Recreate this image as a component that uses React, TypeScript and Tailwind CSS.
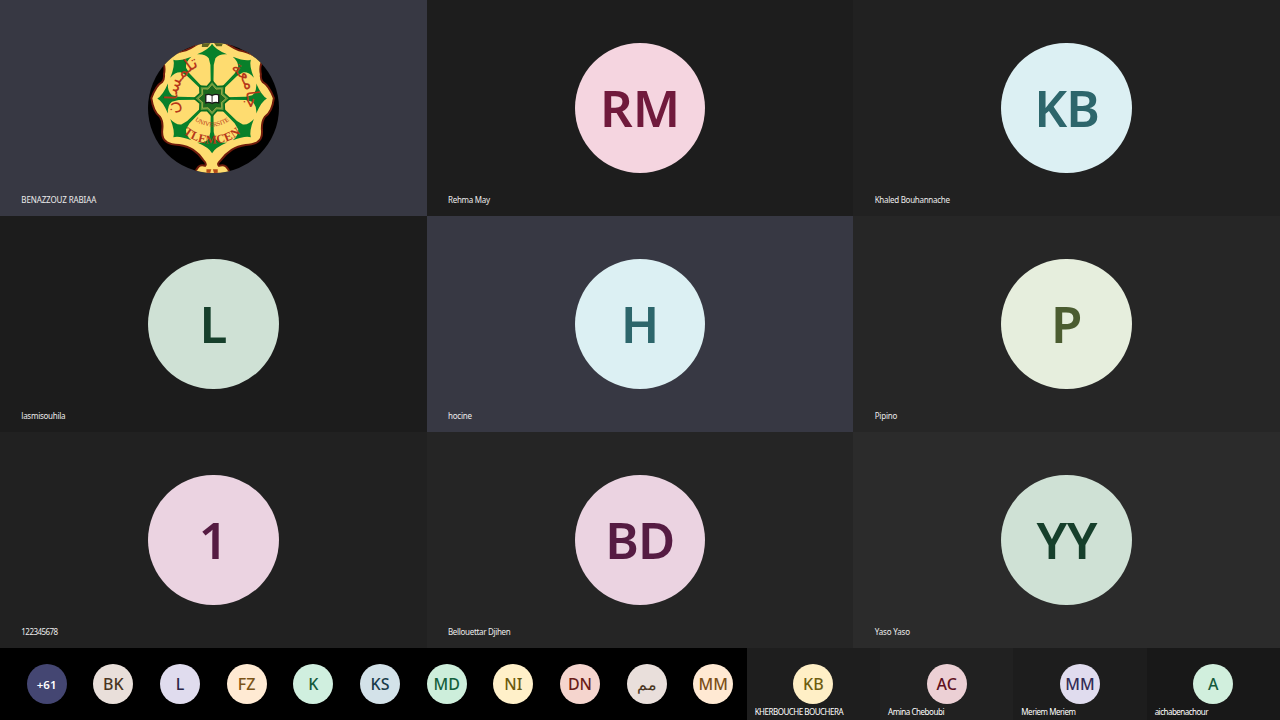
import React from "react";
import clsx from "clsx";

const tiles = [
  { name: "BENAZZOUZ RABIAA", initials: "", tile: "bg-[#373843]", avatar: "", spacing: "tracking-[-0.13px]" },
  { name: "Rehma May", initials: "RM", tile: "bg-[#1d1d1d]", avatar: "bg-[#f5d5e0] text-[#701a3c]", spacing: "tracking-[-0.28px]" },
  { name: "Khaled Bouhannache", initials: "KB", tile: "bg-[#212121]", avatar: "bg-[#dcf0f3] text-[#2d666b] tracking-[-0.8px]", spacing: "tracking-[-0.28px]" },
  { name: "lasmisouhila", initials: "L", tile: "bg-[#1c1c1c]", avatar: "bg-[#cfe1d5] text-[#163f2b]", spacing: "tracking-[-0.26px]" },
  { name: "hocine", initials: "H", tile: "bg-[#373843]", avatar: "bg-[#dcf0f3] text-[#2d666b]", spacing: "tracking-[-0.2px]" },
  { name: "Pipino", initials: "P", tile: "bg-[#262626]", avatar: "bg-[#e6eedd] text-[#4b5c30]", spacing: "tracking-[-0.2px]" },
  { name: "122345678", initials: "1", tile: "bg-[#212121]", avatar: "bg-[#ebd3e1] text-[#551b42]", spacing: "tracking-[-0.55px]" },
  { name: "Bellouettar Djihen", initials: "BD", tile: "bg-[#252525]", avatar: "bg-[#ebd3e1] text-[#551b42] tracking-[-0.8px]", spacing: "tracking-[-0.32px]" },
  { name: "Yaso Yaso", initials: "YY", tile: "bg-[#2b2b2b]", avatar: "bg-[#cfe1d5] text-[#163f2b] tracking-[-0.5px]", spacing: "tracking-[-0.15px]" },
];

const overflow = [
  { initials: "BK", avatar: "bg-[#e9dfda] text-[#4a3521]" },
  { initials: "L", avatar: "bg-[#e0dcee] text-[#2b2548]" },
  { initials: "FZ", avatar: "bg-[#ffead3] text-[#7c5417]" },
  { initials: "K", avatar: "bg-[#d0efdf] text-[#155a3c]" },
  { initials: "KS", avatar: "bg-[#d3e2e9] text-[#193c4a]" },
  { initials: "MD", avatar: "bg-[#cdeedb] text-[#13603b]" },
  { initials: "NI", avatar: "bg-[#fff0c9] text-[#6b5a0c]" },
  { initials: "DN", avatar: "bg-[#f5d5ce] text-[#6b1d18]" },
  { initials: "مم", avatar: "bg-[#e9dfdb] text-[#4a3521]" },
  { initials: "MM", avatar: "bg-[#ffe9d3] text-[#7c4f17]" },
];

const strip = [
  { name: "KHERBOUCHE BOUCHERA", initials: "KB", tile: "bg-[#1e1e1e]", avatar: "bg-[#ffefc6] text-[#6e5d10]", spacing: "tracking-[-0.5px]" },
  { name: "Amina Cheboubi", initials: "AC", tile: "bg-[#212121]", avatar: "bg-[#ecd0d5] text-[#5e1120]", spacing: "tracking-[-0.45px]" },
  { name: "Meriem Meriem", initials: "MM", tile: "bg-[#1d1d1d]", avatar: "bg-[#e0dcee] text-[#332c55]", spacing: "tracking-[-0.48px]" },
  { name: "aichabenachour", initials: "A", tile: "bg-[#181818]", avatar: "bg-[#d1efdd] text-[#155a3c]", spacing: "tracking-[-0.52px]" },
];

const spokes = [0, 45, 90, 135, 180, 225, 270, 315];

const UniversityLogo = () => (
  <svg viewBox="24 24 393 393" className="size-[130.5px] rounded-full bg-black">
    {/* Scalloped plate */}
    <path
      d="M217 -12 Q190 18 165 32 Q150 42 138 46 Q110 52 92 62 Q70 70 71 86 Q76 100 72 118 Q74 134 66 142 Q48 152 34 190 Q40 232 60 246 Q70 260 67 285 Q64 312 80 322 Q92 330 118 331 Q142 334 160 346 Q178 358 190 376 Q202 388 196 394 Q172 384 164 424 L272 424 Q264 384 238 394 Q230 388 244 376 Q258 358 276 346 Q294 334 318 331 Q342 330 354 322 Q370 312 367 285 Q366 260 376 246 Q398 232 403 190 Q388 152 370 142 Q362 134 364 118 Q360 100 365 86 Q366 70 344 62 Q326 52 298 46 Q286 42 271 32 Q246 18 217 -12 Z"
      fill="#fedc70"
      stroke="#711c0c"
      strokeWidth="6"
    />
    <path d="M200 404 H234 V420 H200 Z" fill="#b44b18" />
    <path d="M217 396 L224 420 H210 Z" fill="#fedc70" />
    <path d="M187 24 H212 L204 36 H186 Z M223 24 H250 L246 34 H230 Z" fill="#5f6420" />

    {/* Spokes with anchor heads */}
    {spokes.map((angle) => (
      <path
        key={angle}
        transform={`rotate(${angle} 217 191)`}
        fill="#08802a"
        d="M217 26 Q225 42 262 58 Q238 56 227 70 L222 90 L221 150 H213 L212 90 L207 70 Q196 56 172 58 Q209 42 217 26 Z"
      />
    ))}

    {/* Centre rosette */}
    <path
      d="M217 138 L232 155 L254 154 L253 176 L270 191 L253 206 L254 228 L232 227 L217 244 L202 227 L180 228 L181 206 L164 191 L181 176 L180 154 L202 155 Z"
      fill="#5f9a3c"
      stroke="#086c20"
      strokeWidth="5"
    />
    <path
      d="M217 149 L229 163 L246 162 L245 179 L259 191 L245 203 L246 220 L229 219 L217 233 L205 219 L188 220 L189 203 L175 191 L189 179 L188 162 L205 163 Z"
      fill="#1d6920"
      stroke="#c1bd55"
      strokeWidth="2"
    />
    <path d="M198 180 Q208 177 217 182 Q226 177 237 180 V204 Q226 201 217 206 Q208 201 198 204 Z" fill="#fff" stroke="#171717" strokeWidth="4" />
    <path d="M217 182 V205" stroke="#333" strokeWidth="3" />

    {/* Lettering around the rim */}
    <defs>
      <path id="rim-left" d="M136 257 A104 104 0 0 1 203 88" />
      <path id="rim-right" d="M238 89 A104 104 0 0 1 301 252" />
      <path id="rim-inner" d="M146 236 A84 84 0 0 0 288 236" />
      <path id="rim-outer" d="M104 266 A135 135 0 0 0 330 266" />
    </defs>
    <g fill="#b63619">
      <text fontFamily="DejaVu Sans, sans-serif" fontSize="54">
        <textPath href="#rim-left" startOffset="50%" textAnchor="middle">تلمسان</textPath>
      </text>
      <text fontFamily="DejaVu Sans, sans-serif" fontSize="54">
        <textPath href="#rim-right" startOffset="50%" textAnchor="middle">جامعة</textPath>
      </text>
      <text fontFamily="Liberation Serif, serif" fontSize="19">
        <textPath href="#rim-inner" startOffset="50%" textAnchor="middle">UNIVERSITE</textPath>
      </text>
      <text fontFamily="Liberation Serif, serif" fontSize="36" fontWeight="700" letterSpacing="1">
        <textPath href="#rim-outer" startOffset="50%" textAnchor="middle">TLEMCEN</textPath>
      </text>
    </g>
  </svg>
);

const SmallAvatar = ({ initials, avatar }: { initials: string; avatar: string }) => (
  <div className={clsx("flex size-10 items-center justify-center rounded-full text-[16px] leading-none font-medium", avatar)}>
    {initials}
  </div>
);

const App = () => {
  return (
    <div className="flex h-[720px] w-[1280px] flex-col overflow-hidden bg-black font-['Noto_Sans','Open_Sans',sans-serif]">
      {/* Main gallery */}
      <div className="grid h-[648px] grid-cols-3 grid-rows-3">
        {tiles.map((t) => (
          <div key={t.name} className={clsx("flex flex-col", t.tile)}>
            <div className="mt-[42.5px] flex h-[131px] justify-center">
              {t.initials ? (
                <div className={clsx("flex size-[130.5px] items-center justify-center rounded-full pb-px text-[51px] leading-none font-semibold", t.avatar)}>
                  {t.initials}
                </div>
              ) : (
                <UniversityLogo />
              )}
            </div>
            <span className={clsx("mt-[20.5px] pl-[21.33px] text-[8px] leading-3 whitespace-nowrap text-[#ececec]", t.spacing)}>
              {t.name}
            </span>
          </div>
        ))}
      </div>

      {/* Bottom strip */}
      <div className="flex h-[72px]">
        <div className="grid w-[746.67px] grid-cols-11 justify-items-center pt-4 pl-[13.33px]">
          <div className="flex size-10 items-center justify-center rounded-full bg-[#444672] pt-0.5 text-[11.5px] leading-none font-semibold text-white">
            +61
          </div>
          {overflow.map((p) => (
            <SmallAvatar key={p.initials} initials={p.initials} avatar={p.avatar} />
          ))}
        </div>
        <div className="grid flex-1 grid-cols-4">
          {strip.map((p) => (
            <div key={p.name} className={clsx("flex flex-col pt-4", p.tile)}>
              <div className="flex justify-center">
                <SmallAvatar initials={p.initials} avatar={p.avatar} />
              </div>
              <span className={clsx("mt-0.5 pl-2 text-[8px] leading-3 whitespace-nowrap text-white", p.spacing)}>{p.name}</span>
            </div>
          ))}
        </div>
      </div>
    </div>
  );
};

export default App;
